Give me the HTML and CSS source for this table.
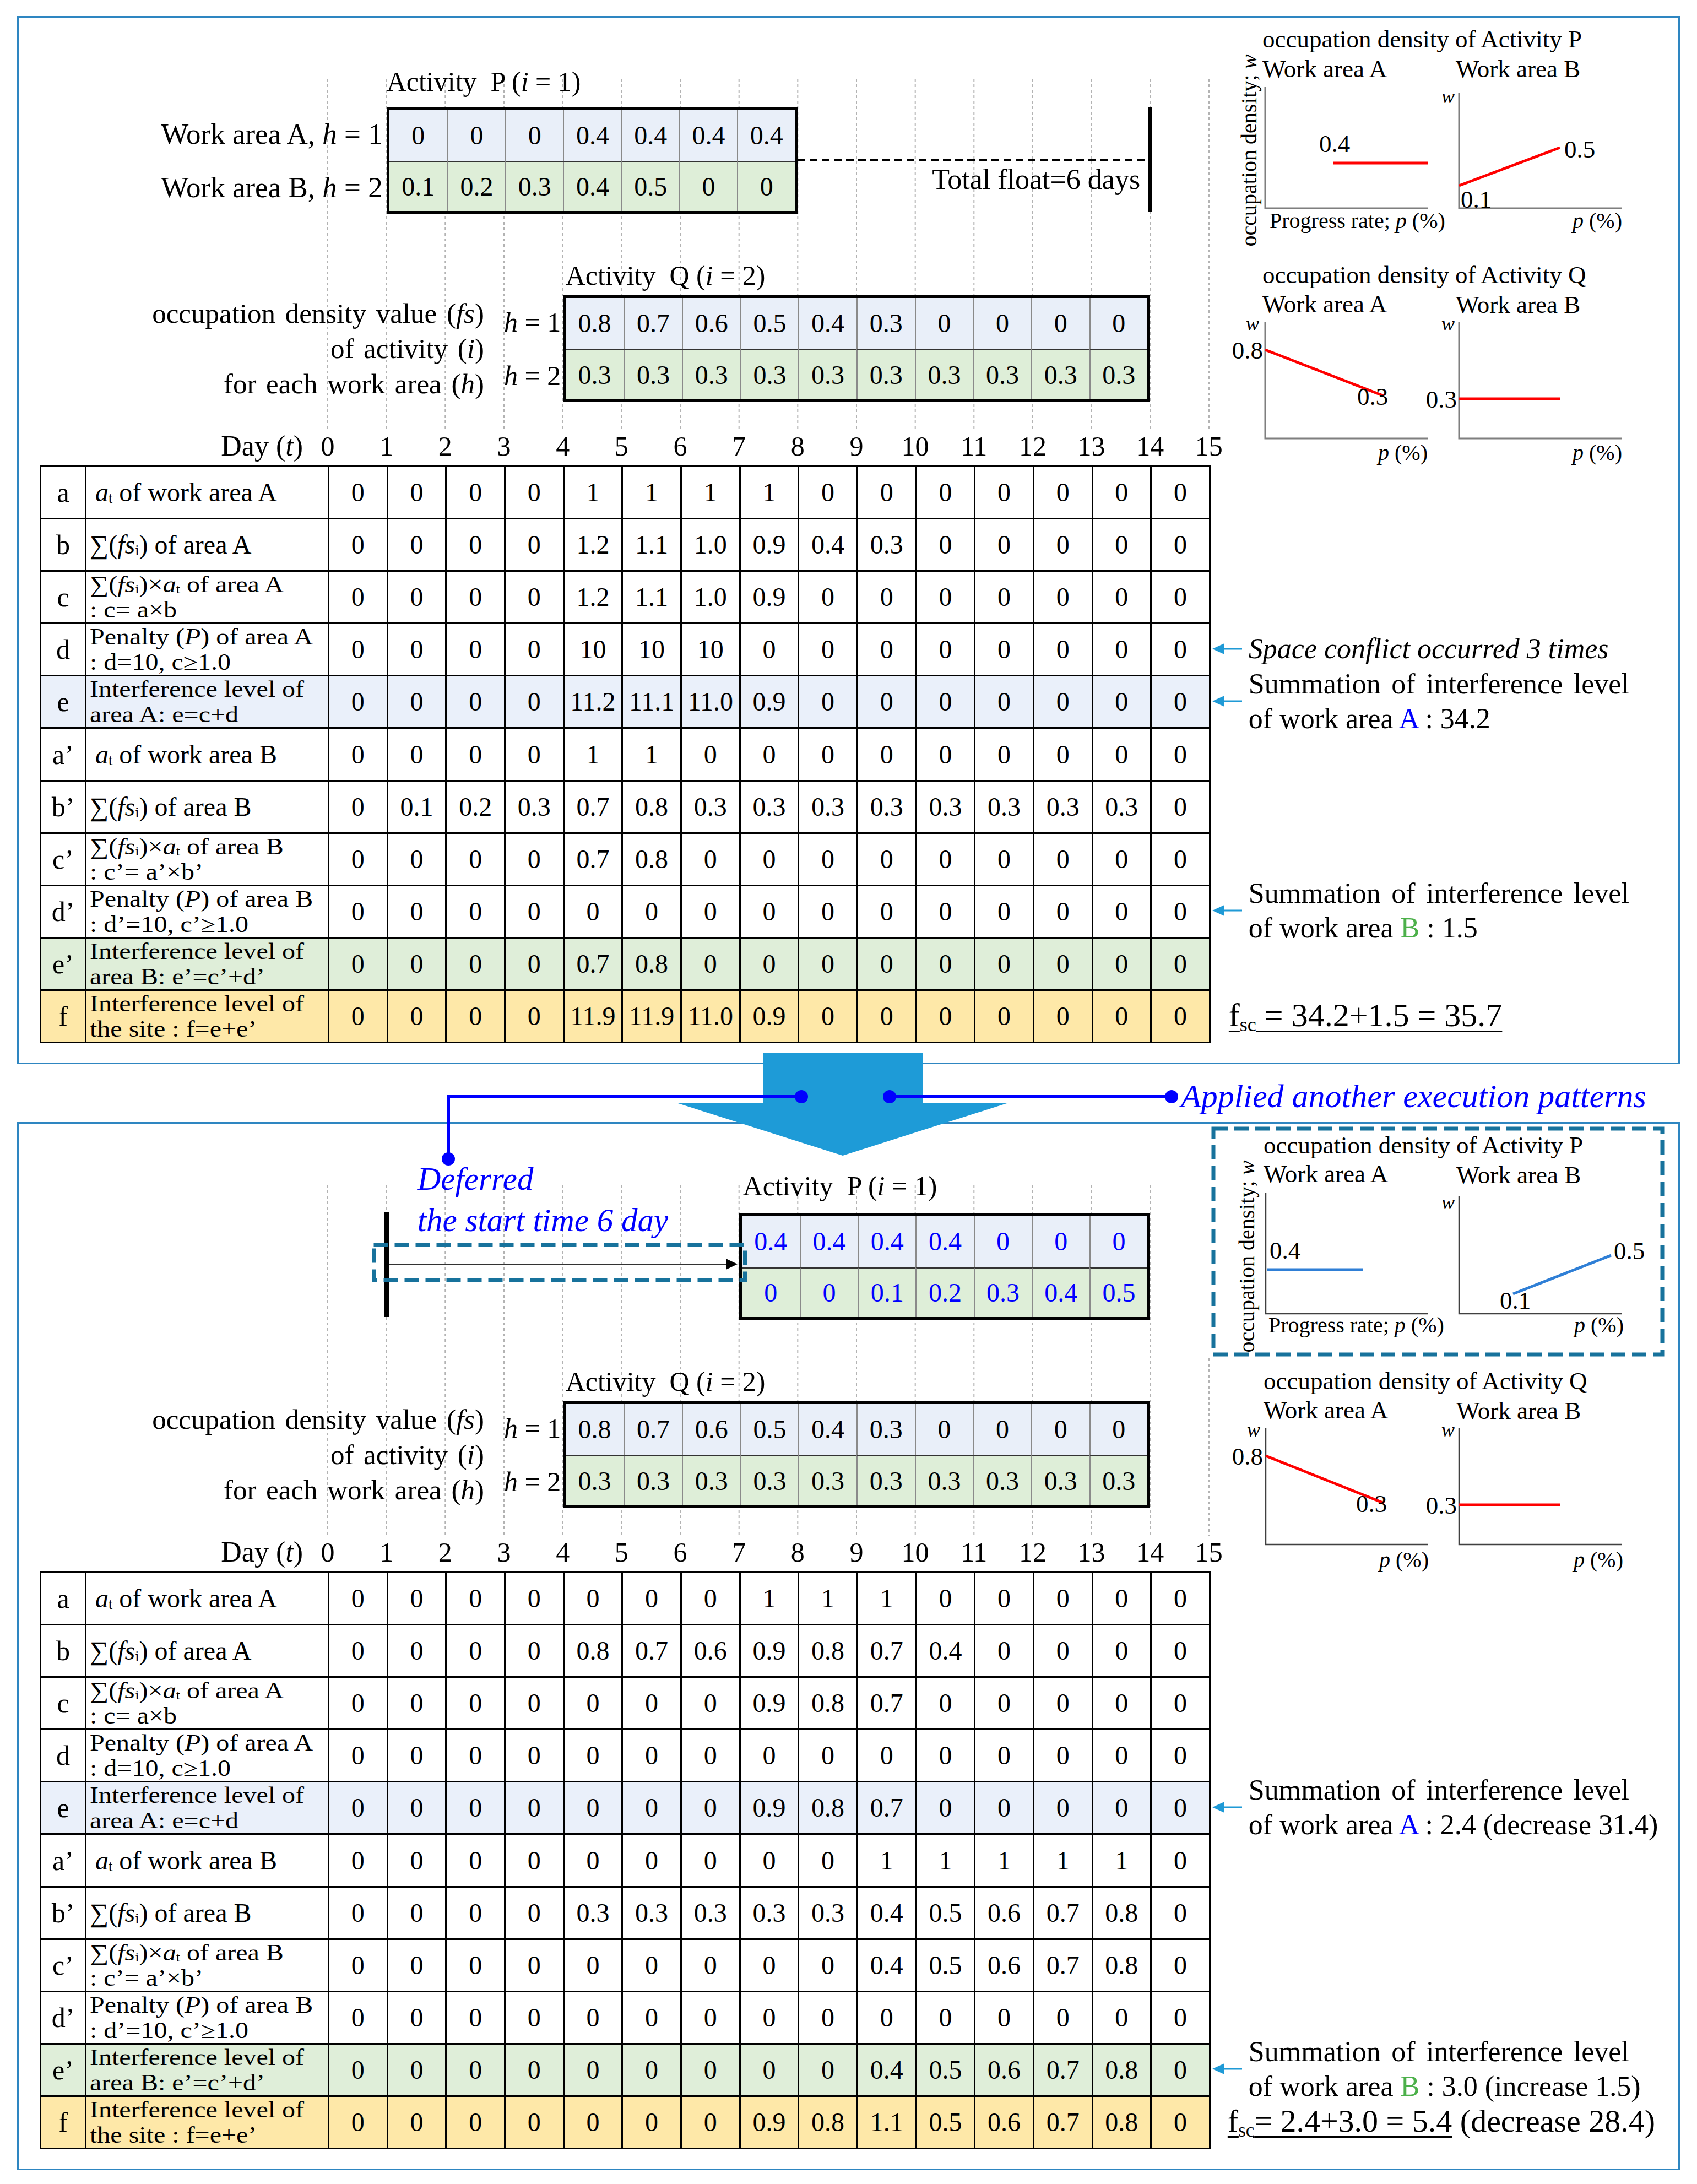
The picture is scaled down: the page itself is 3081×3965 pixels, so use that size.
FILE: index.html
```html
<!DOCTYPE html>
<html lang="en">
<head>
<meta charset="utf-8">
<title>Space conflict interference level</title>
<link rel="stylesheet" href="styles.css">
</head>
<body>
<div class="figure">

  <!-- ================= TOP PANEL ================= -->
  <section class="panel">
    <div class="upper">
      <div class="gantt">
        <svg class="grid" width="1602" height="637" viewBox="0 0 1602 637">
          <g class="gl">
            <line x1="1" y1="0" x2="1" y2="637"/><line x1="107.7" y1="0" x2="107.7" y2="637"/><line x1="214.3" y1="0" x2="214.3" y2="637"/><line x1="321" y1="0" x2="321" y2="637"/><line x1="427.7" y1="0" x2="427.7" y2="637"/><line x1="534.3" y1="0" x2="534.3" y2="637"/><line x1="641" y1="0" x2="641" y2="637"/><line x1="747.7" y1="0" x2="747.7" y2="637"/><line x1="854.3" y1="0" x2="854.3" y2="637"/><line x1="961" y1="0" x2="961" y2="637"/><line x1="1067.7" y1="0" x2="1067.7" y2="637"/><line x1="1174.3" y1="0" x2="1174.3" y2="637"/><line x1="1281" y1="0" x2="1281" y2="637"/><line x1="1387.7" y1="0" x2="1387.7" y2="637"/><line x1="1494.3" y1="0" x2="1494.3" y2="637"/><line x1="1601" y1="0" x2="1601" y2="637"/>
          </g>
        </svg>

        <div class="ptitle">Activity&nbsp; P (<i>i</i> = 1)</div>
        <div class="plabels">
          <div>Work area A, <i>h</i> = 1</div>
          <div>Work area B, <i>h</i> = 2</div>
        </div>
        <div class="bar bar7 pbar">
          <div class="c r1">0</div><div class="c r1">0</div><div class="c r1">0</div><div class="c r1">0.4</div><div class="c r1">0.4</div><div class="c r1">0.4</div><div class="c r1">0.4</div>
          <div class="c r2">0.1</div><div class="c r2">0.2</div><div class="c r2">0.3</div><div class="c r2">0.4</div><div class="c r2">0.5</div><div class="c r2">0</div><div class="c r2">0</div>
        </div>
        <div class="float">
          <div class="dash"></div>
          <div class="ftext">Total float=6 days</div>
        </div>

        <div class="qtitle">Activity&nbsp; Q (<i>i</i> = 2)</div>
        <div class="qlabels">
          <div>occupation density value (<i>fs</i>)</div>
          <div>of activity (<i>i</i>)</div>
          <div>for each work area (<i>h</i>)</div>
        </div>
        <div class="hlabels">
          <div><i>h</i> = 1</div>
          <div><i>h</i> = 2</div>
        </div>
        <div class="bar bar10 qbar">
          <div class="c r1">0.8</div><div class="c r1">0.7</div><div class="c r1">0.6</div><div class="c r1">0.5</div><div class="c r1">0.4</div><div class="c r1">0.3</div><div class="c r1">0</div><div class="c r1">0</div><div class="c r1">0</div><div class="c r1">0</div>
          <div class="c r2">0.3</div><div class="c r2">0.3</div><div class="c r2">0.3</div><div class="c r2">0.3</div><div class="c r2">0.3</div><div class="c r2">0.3</div><div class="c r2">0.3</div><div class="c r2">0.3</div><div class="c r2">0.3</div><div class="c r2">0.3</div>
        </div>

        <div class="dayrow">
          <div class="daylabel">Day (<i>t</i>)</div>
          <div class="daynums"><span>0</span><span>1</span><span>2</span><span>3</span><span>4</span><span>5</span><span>6</span><span>7</span><span>8</span><span>9</span><span>10</span><span>11</span><span>12</span><span>13</span><span>14</span><span>15</span></div>
        </div>
      </div>

      <div class="charts">
        <svg width="847" height="813" viewBox="0 0 847 813">
          <text x="92" y="54" class="t45">occupation density of Activity P</text>
          <text x="92" y="108" class="t45">Work area A</text>
          <text x="443" y="108" class="t45">Work area B</text>
          <text x="67" y="241" class="t40" text-anchor="middle" dominant-baseline="central" transform="rotate(-90 67 241)">occupation density; <tspan class="it">w</tspan></text>
          <path d="M97 126V346H392" class="axis"/>
          <line x1="220" y1="264" x2="392" y2="264" class="red"/>
          <text x="195" y="244" class="t45">0.4</text>
          <text x="105" y="382" class="t40">Progress rate; <tspan class="it">p</tspan> (%)</text>
          <path d="M449 136V346H745" class="axis"/>
          <text x="441" y="155" class="w" text-anchor="end">w</text>
          <line x1="449" y1="305" x2="632" y2="236" class="red"/>
          <text x="640" y="254" class="t45">0.5</text>
          <text x="452" y="345" class="t45">0.1</text>
          <text x="745" y="382" class="t40" text-anchor="end"><tspan class="it">p</tspan> (%)</text>

          <text x="92" y="482" class="t45">occupation density of Activity Q</text>
          <text x="92" y="535" class="t45">Work area A</text>
          <text x="443" y="536" class="t45">Work area B</text>
          <path d="M97 552V764H392" class="axis"/>
          <text x="86" y="568" class="w" text-anchor="end">w</text>
          <line x1="97" y1="603" x2="313" y2="687" class="red"/>
          <text x="93" y="619" class="t45" text-anchor="end">0.8</text>
          <text x="264" y="703" class="t45">0.3</text>
          <path d="M449 552V764H745" class="axis"/>
          <text x="441" y="568" class="w" text-anchor="end">w</text>
          <line x1="449" y1="692" x2="632" y2="692" class="red"/>
          <text x="445" y="708" class="t45" text-anchor="end">0.3</text>
          <text x="392" y="803" class="t40" text-anchor="end"><tspan class="it">p</tspan> (%)</text>
          <text x="745" y="803" class="t40" text-anchor="end"><tspan class="it">p</tspan> (%)</text>
        </svg>
      </div>
    </div>

    <div class="lower">
      <table class="calc">
        <colgroup><col class="c-let"><col class="c-lab"><col span="15" class="c-v"></colgroup>
        <tr><td class="let">a</td><td class="lab ind"><i>a</i><sub>t</sub> of work area A</td><td>0</td><td>0</td><td>0</td><td>0</td><td>1</td><td>1</td><td>1</td><td>1</td><td>0</td><td>0</td><td>0</td><td>0</td><td>0</td><td>0</td><td>0</td></tr>
        <tr><td class="let">b</td><td class="lab">∑(<i>fs</i><sub>i</sub>) of area A</td><td>0</td><td>0</td><td>0</td><td>0</td><td>1.2</td><td>1.1</td><td>1.0</td><td>0.9</td><td>0.4</td><td>0.3</td><td>0</td><td>0</td><td>0</td><td>0</td><td>0</td></tr>
        <tr><td class="let">c</td><td class="lab"><div class="two"><div>∑(<i>fs</i><sub>i</sub>)×<i>a</i><sub>t</sub> of area A</div><div>: c= a×b</div></div></td><td>0</td><td>0</td><td>0</td><td>0</td><td>1.2</td><td>1.1</td><td>1.0</td><td>0.9</td><td>0</td><td>0</td><td>0</td><td>0</td><td>0</td><td>0</td><td>0</td></tr>
        <tr><td class="let">d</td><td class="lab"><div class="two"><div>Penalty (<i>P</i>) of area A</div><div>: d=10, c≥1.0</div></div></td><td>0</td><td>0</td><td>0</td><td>0</td><td>10</td><td>10</td><td>10</td><td>0</td><td>0</td><td>0</td><td>0</td><td>0</td><td>0</td><td>0</td><td>0</td></tr>
        <tr class="re"><td class="let">e</td><td class="lab"><div class="two"><div>Interference level of</div><div>area A: e=c+d</div></div></td><td>0</td><td>0</td><td>0</td><td>0</td><td>11.2</td><td>11.1</td><td>11.0</td><td>0.9</td><td>0</td><td>0</td><td>0</td><td>0</td><td>0</td><td>0</td><td>0</td></tr>
        <tr><td class="let">a’</td><td class="lab ind"><i>a</i><sub>t</sub> of work area B</td><td>0</td><td>0</td><td>0</td><td>0</td><td>1</td><td>1</td><td>0</td><td>0</td><td>0</td><td>0</td><td>0</td><td>0</td><td>0</td><td>0</td><td>0</td></tr>
        <tr><td class="let">b’</td><td class="lab">∑(<i>fs</i><sub>i</sub>) of area B</td><td>0</td><td>0.1</td><td>0.2</td><td>0.3</td><td>0.7</td><td>0.8</td><td>0.3</td><td>0.3</td><td>0.3</td><td>0.3</td><td>0.3</td><td>0.3</td><td>0.3</td><td>0.3</td><td>0</td></tr>
        <tr><td class="let">c’</td><td class="lab"><div class="two"><div>∑(<i>fs</i><sub>i</sub>)×<i>a</i><sub>t</sub> of area B</div><div>: c’= a’×b’</div></div></td><td>0</td><td>0</td><td>0</td><td>0</td><td>0.7</td><td>0.8</td><td>0</td><td>0</td><td>0</td><td>0</td><td>0</td><td>0</td><td>0</td><td>0</td><td>0</td></tr>
        <tr><td class="let">d’</td><td class="lab"><div class="two"><div>Penalty (<i>P</i>) of area B</div><div>: d’=10, c’≥1.0</div></div></td><td>0</td><td>0</td><td>0</td><td>0</td><td>0</td><td>0</td><td>0</td><td>0</td><td>0</td><td>0</td><td>0</td><td>0</td><td>0</td><td>0</td><td>0</td></tr>
        <tr class="re2"><td class="let">e’</td><td class="lab"><div class="two"><div>Interference level of</div><div>area B: e’=c’+d’</div></div></td><td>0</td><td>0</td><td>0</td><td>0</td><td>0.7</td><td>0.8</td><td>0</td><td>0</td><td>0</td><td>0</td><td>0</td><td>0</td><td>0</td><td>0</td><td>0</td></tr>
        <tr class="rf"><td class="let">f</td><td class="lab"><div class="two"><div>Interference level of</div><div>the site : f=e+e’</div></div></td><td>0</td><td>0</td><td>0</td><td>0</td><td>11.9</td><td>11.9</td><td>11.0</td><td>0.9</td><td>0</td><td>0</td><td>0</td><td>0</td><td>0</td><td>0</td><td>0</td></tr>
      </table>

      <div class="notes">
        <div class="note n-d">
          <svg class="arr" width="57" height="24" viewBox="0 0 57 24"><polygon points="3,12 25,2 25,22"/><line x1="24" y1="12" x2="57" y2="12"/></svg>
          <div class="ntext it-note">Space conflict occurred 3 times</div>
        </div>
        <div class="note n-e">
          <svg class="arr" width="57" height="24" viewBox="0 0 57 24"><polygon points="3,12 25,2 25,22"/><line x1="24" y1="12" x2="57" y2="12"/></svg>
          <div class="ntext"><div class="l1">Summation of interference level</div><div>of work area <span class="ca">A</span> : 34.2</div></div>
        </div>
        <div class="note n-d2">
          <svg class="arr" width="57" height="24" viewBox="0 0 57 24"><polygon points="3,12 25,2 25,22"/><line x1="24" y1="12" x2="57" y2="12"/></svg>
          <div class="ntext"><div class="l1">Summation of interference level</div><div>of work area <span class="cb">B</span> : 1.5</div></div>
        </div>
        <div class="note n-f">
          <div class="fsc"><span class="ul">f<sub>sc</sub> = 34.2+1.5 = 35.7</span></div>
        </div>
      </div>
    </div>
  </section>

  <div class="between">
    <span class="applied">Applied another execution patterns</span>
  </div>

  <!-- ================= BOTTOM PANEL ================= -->
  <section class="panel">
    <div class="upper">
      <div class="gantt">
        <svg class="grid" width="1602" height="637" viewBox="0 0 1602 637">
          <g class="gl">
            <line x1="1" y1="0" x2="1" y2="637"/><line x1="107.7" y1="0" x2="107.7" y2="637"/><line x1="214.3" y1="0" x2="214.3" y2="637"/><line x1="321" y1="0" x2="321" y2="637"/><line x1="427.7" y1="0" x2="427.7" y2="637"/><line x1="534.3" y1="0" x2="534.3" y2="637"/><line x1="641" y1="0" x2="641" y2="637"/><line x1="747.7" y1="0" x2="747.7" y2="637"/><line x1="854.3" y1="0" x2="854.3" y2="637"/><line x1="961" y1="0" x2="961" y2="637"/><line x1="1067.7" y1="0" x2="1067.7" y2="637"/><line x1="1174.3" y1="0" x2="1174.3" y2="637"/><line x1="1281" y1="0" x2="1281" y2="637"/><line x1="1387.7" y1="0" x2="1387.7" y2="637"/><line x1="1494.3" y1="0" x2="1494.3" y2="637"/><line x1="1601" y1="315" x2="1601" y2="637"/>
          </g>
        </svg>

        <div class="deferred">
          <svg class="defsvg" width="700" height="200" viewBox="0 0 700 200">
            <rect x="26" y="3" width="8" height="190" fill="#000"/>
            <line x1="34" y1="97" x2="650" y2="97" stroke="#333" stroke-width="2"/>
            <polygon points="667,97 646,87 646,107" fill="#000"/>
            <rect x="6.5" y="62.5" width="674" height="64" fill="none" stroke="#17729c" stroke-width="7" stroke-dasharray="26 12"/>
          </svg>
          <div class="deftext">Deferred<br>the start time 6 day</div>
        </div>

        <div class="ptitle ptitle-b">Activity&nbsp; P (<i>i</i> = 1)</div>
        <div class="bar bar7 pbar-b blue">
          <div class="c r1">0.4</div><div class="c r1">0.4</div><div class="c r1">0.4</div><div class="c r1">0.4</div><div class="c r1">0</div><div class="c r1">0</div><div class="c r1">0</div>
          <div class="c r2">0</div><div class="c r2">0</div><div class="c r2">0.1</div><div class="c r2">0.2</div><div class="c r2">0.3</div><div class="c r2">0.4</div><div class="c r2">0.5</div>
        </div>

        <div class="qtitle">Activity&nbsp; Q (<i>i</i> = 2)</div>
        <div class="qlabels">
          <div>occupation density value (<i>fs</i>)</div>
          <div>of activity (<i>i</i>)</div>
          <div>for each work area (<i>h</i>)</div>
        </div>
        <div class="hlabels">
          <div><i>h</i> = 1</div>
          <div><i>h</i> = 2</div>
        </div>
        <div class="bar bar10 qbar">
          <div class="c r1">0.8</div><div class="c r1">0.7</div><div class="c r1">0.6</div><div class="c r1">0.5</div><div class="c r1">0.4</div><div class="c r1">0.3</div><div class="c r1">0</div><div class="c r1">0</div><div class="c r1">0</div><div class="c r1">0</div>
          <div class="c r2">0.3</div><div class="c r2">0.3</div><div class="c r2">0.3</div><div class="c r2">0.3</div><div class="c r2">0.3</div><div class="c r2">0.3</div><div class="c r2">0.3</div><div class="c r2">0.3</div><div class="c r2">0.3</div><div class="c r2">0.3</div>
        </div>

        <div class="dayrow">
          <div class="daylabel">Day (<i>t</i>)</div>
          <div class="daynums"><span>0</span><span>1</span><span>2</span><span>3</span><span>4</span><span>5</span><span>6</span><span>7</span><span>8</span><span>9</span><span>10</span><span>11</span><span>12</span><span>13</span><span>14</span><span>15</span></div>
        </div>
      </div>

      <div class="charts">
        <svg width="847" height="813" viewBox="0 0 847 813">
          <rect x="3" y="9" width="815" height="410" fill="none" stroke="#17729c" stroke-width="7" stroke-dasharray="26 12"/>
          <text x="94" y="54" class="t45">occupation density of Activity P</text>
          <text x="94" y="106" class="t45">Work area A</text>
          <text x="444" y="108" class="t45">Work area B</text>
          <text x="63" y="241" class="t40" text-anchor="middle" dominant-baseline="central" transform="rotate(-90 63 241)">occupation density; <tspan class="it">w</tspan></text>
          <path d="M98 125V345H392" class="axis2"/>
          <line x1="100" y1="265" x2="275" y2="265" class="blueline"/>
          <text x="105" y="245" class="t45">0.4</text>
          <text x="103" y="379" class="t40">Progress rate; <tspan class="it">p</tspan> (%)</text>
          <path d="M449 131V345H745" class="axis2"/>
          <text x="441" y="155" class="w" text-anchor="end">w</text>
          <line x1="547" y1="309" x2="725" y2="239" class="blueline"/>
          <text x="730" y="246" class="t45">0.5</text>
          <text x="523" y="336" class="t45">0.1</text>
          <text x="748" y="379" class="t40" text-anchor="end"><tspan class="it">p</tspan> (%)</text>

          <text x="94" y="482" class="t45">occupation density of Activity Q</text>
          <text x="94" y="535" class="t45">Work area A</text>
          <text x="444" y="536" class="t45">Work area B</text>
          <path d="M98 552V764H392" class="axis2"/>
          <text x="88" y="568" class="w" text-anchor="end">w</text>
          <line x1="98" y1="603" x2="313" y2="689" class="red"/>
          <text x="93" y="619" class="t45" text-anchor="end">0.8</text>
          <text x="262" y="705" class="t45">0.3</text>
          <path d="M449 552V764H745" class="axis2"/>
          <text x="441" y="568" class="w" text-anchor="end">w</text>
          <line x1="449" y1="692" x2="633" y2="692" class="red"/>
          <text x="445" y="708" class="t45" text-anchor="end">0.3</text>
          <text x="394" y="805" class="t40" text-anchor="end"><tspan class="it">p</tspan> (%)</text>
          <text x="747" y="805" class="t40" text-anchor="end"><tspan class="it">p</tspan> (%)</text>
        </svg>
      </div>
    </div>

    <div class="lower">
      <table class="calc">
        <colgroup><col class="c-let"><col class="c-lab"><col span="15" class="c-v"></colgroup>
        <tr><td class="let">a</td><td class="lab ind"><i>a</i><sub>t</sub> of work area A</td><td>0</td><td>0</td><td>0</td><td>0</td><td>0</td><td>0</td><td>0</td><td>1</td><td>1</td><td>1</td><td>0</td><td>0</td><td>0</td><td>0</td><td>0</td></tr>
        <tr><td class="let">b</td><td class="lab">∑(<i>fs</i><sub>i</sub>) of area A</td><td>0</td><td>0</td><td>0</td><td>0</td><td>0.8</td><td>0.7</td><td>0.6</td><td>0.9</td><td>0.8</td><td>0.7</td><td>0.4</td><td>0</td><td>0</td><td>0</td><td>0</td></tr>
        <tr><td class="let">c</td><td class="lab"><div class="two"><div>∑(<i>fs</i><sub>i</sub>)×<i>a</i><sub>t</sub> of area A</div><div>: c= a×b</div></div></td><td>0</td><td>0</td><td>0</td><td>0</td><td>0</td><td>0</td><td>0</td><td>0.9</td><td>0.8</td><td>0.7</td><td>0</td><td>0</td><td>0</td><td>0</td><td>0</td></tr>
        <tr><td class="let">d</td><td class="lab"><div class="two"><div>Penalty (<i>P</i>) of area A</div><div>: d=10, c≥1.0</div></div></td><td>0</td><td>0</td><td>0</td><td>0</td><td>0</td><td>0</td><td>0</td><td>0</td><td>0</td><td>0</td><td>0</td><td>0</td><td>0</td><td>0</td><td>0</td></tr>
        <tr class="re"><td class="let">e</td><td class="lab"><div class="two"><div>Interference level of</div><div>area A: e=c+d</div></div></td><td>0</td><td>0</td><td>0</td><td>0</td><td>0</td><td>0</td><td>0</td><td>0.9</td><td>0.8</td><td>0.7</td><td>0</td><td>0</td><td>0</td><td>0</td><td>0</td></tr>
        <tr><td class="let">a’</td><td class="lab ind"><i>a</i><sub>t</sub> of work area B</td><td>0</td><td>0</td><td>0</td><td>0</td><td>0</td><td>0</td><td>0</td><td>0</td><td>0</td><td>1</td><td>1</td><td>1</td><td>1</td><td>1</td><td>0</td></tr>
        <tr><td class="let">b’</td><td class="lab">∑(<i>fs</i><sub>i</sub>) of area B</td><td>0</td><td>0</td><td>0</td><td>0</td><td>0.3</td><td>0.3</td><td>0.3</td><td>0.3</td><td>0.3</td><td>0.4</td><td>0.5</td><td>0.6</td><td>0.7</td><td>0.8</td><td>0</td></tr>
        <tr><td class="let">c’</td><td class="lab"><div class="two"><div>∑(<i>fs</i><sub>i</sub>)×<i>a</i><sub>t</sub> of area B</div><div>: c’= a’×b’</div></div></td><td>0</td><td>0</td><td>0</td><td>0</td><td>0</td><td>0</td><td>0</td><td>0</td><td>0</td><td>0.4</td><td>0.5</td><td>0.6</td><td>0.7</td><td>0.8</td><td>0</td></tr>
        <tr><td class="let">d’</td><td class="lab"><div class="two"><div>Penalty (<i>P</i>) of area B</div><div>: d’=10, c’≥1.0</div></div></td><td>0</td><td>0</td><td>0</td><td>0</td><td>0</td><td>0</td><td>0</td><td>0</td><td>0</td><td>0</td><td>0</td><td>0</td><td>0</td><td>0</td><td>0</td></tr>
        <tr class="re2"><td class="let">e’</td><td class="lab"><div class="two"><div>Interference level of</div><div>area B: e’=c’+d’</div></div></td><td>0</td><td>0</td><td>0</td><td>0</td><td>0</td><td>0</td><td>0</td><td>0</td><td>0</td><td>0.4</td><td>0.5</td><td>0.6</td><td>0.7</td><td>0.8</td><td>0</td></tr>
        <tr class="rf"><td class="let">f</td><td class="lab"><div class="two"><div>Interference level of</div><div>the site : f=e+e’</div></div></td><td>0</td><td>0</td><td>0</td><td>0</td><td>0</td><td>0</td><td>0</td><td>0.9</td><td>0.8</td><td>1.1</td><td>0.5</td><td>0.6</td><td>0.7</td><td>0.8</td><td>0</td></tr>
      </table>

      <div class="notes">
        <div class="note n-e">
          <svg class="arr" width="57" height="24" viewBox="0 0 57 24"><polygon points="3,12 25,2 25,22"/><line x1="24" y1="12" x2="57" y2="12"/></svg>
          <div class="ntext"><div class="l1">Summation of interference level</div><div>of work area <span class="ca">A</span> : 2.4 (decrease 31.4)</div></div>
        </div>
        <div class="note n-e2">
          <svg class="arr" width="57" height="24" viewBox="0 0 57 24"><polygon points="3,12 25,2 25,22"/><line x1="24" y1="12" x2="57" y2="12"/></svg>
          <div class="ntext"><div class="l1">Summation of interference level</div><div>of work area <span class="cb">B</span> : 3.0 (increase 1.5)</div></div>
        </div>
        <div class="note n-f">
          <div class="fsc fsc-b"><span class="ul">f<sub>sc</sub>= 2.4+3.0 = 5.4</span> (decrease 28.4)</div>
        </div>
      </div>
    </div>
  </section>

  <!-- transition arrow and connectors (drawn over the panel borders) -->
  <svg class="overlay" width="1360" height="220" viewBox="0 0 1360 220">
    <polygon points="605,12 896,12 896,103 1048,103 750,198 451,103 605,103" fill="#1e9bd7"/>
    <polyline points="675,91 34,91 34,204" fill="none" stroke="#0000ff" stroke-width="6"/>
    <circle cx="675" cy="91" r="12" fill="#0000ff"/>
    <circle cx="34" cy="204" r="12" fill="#0000ff"/>
    <line x1="835" y1="91" x2="1347" y2="91" stroke="#0000ff" stroke-width="6"/>
    <circle cx="835" cy="91" r="12" fill="#0000ff"/>
    <circle cx="1347" cy="91" r="12" fill="#0000ff"/>
  </svg>
</div>
</body>
</html>
```

FILE: styles.css
```css
* { box-sizing: border-box; }

html, body {
  margin: 0;
  padding: 0;
  background: #ffffff;
}

body {
  width: 3081px;
  height: 3965px;
  overflow: hidden;
  font-family: "Liberation Serif", "Times New Roman", serif;
  color: #000;
}

.figure {
  position: relative;
  width: 3081px;
  height: 3965px;
  padding: 29px 0 0 31px;
}

.panel {
  position: relative;
  width: 3019px;
  height: 1903px;
  border: 3px solid #2e86c1;
}

.between {
  height: 105px;
  display: flex;
  align-items: center;
  padding-left: 2113px;
  padding-top: 11px;
}

.applied {
  font-style: italic;
  font-size: 60px;
  line-height: 70px;
  color: #0000ff;
  white-space: nowrap;
}

/* ---------- upper area: gantt + density charts ---------- */
.upper {
  display: flex;
  height: 813px;
}

.gantt {
  position: relative;
  flex: none;
  width: 2161px;
  display: grid;
  grid-template-columns: 561px repeat(15, 106.667px);
  grid-template-rows: 163px 193px 148px 194px 115px;
  font-size: 50px;
  line-height: 60px;
}

.gantt > * {
  position: relative;
  z-index: 1;
}

.gantt > .grid {
  position: absolute;
  z-index: 0;
  left: 560px;
  top: 111px;
}

.gl line {
  stroke: #b3b3b3;
  stroke-width: 2;
  stroke-dasharray: 5 5;
}

.ptitle {
  grid-row: 1;
  grid-column: 3 / 12;
  align-self: end;
  margin-bottom: 17px;
  white-space: nowrap;
}

.ptitle-b {
  grid-column: 9 / 17;
  margin-left: 7px;
  margin-bottom: 20px;
}

.plabels {
  grid-row: 2;
  grid-column: 1 / 3;
  display: grid;
  grid-template-rows: 1fr 1fr;
  align-items: center;
  text-align: right;
  padding-right: 7px;
  font-size: 53px;
  white-space: nowrap;
}

.bar {
  display: grid;
  grid-template-rows: 1fr 1fr;
  border: 5px solid #000;
  font-size: 48px;
}

.bar7 { grid-template-columns: repeat(7, 1fr); }
.bar10 { grid-template-columns: repeat(10, 1fr); }

.bar .c {
  display: flex;
  align-items: center;
  justify-content: center;
  border-left: 2px solid #8a8a8a;
}

.bar7 .c:nth-child(7n+1),
.bar10 .c:nth-child(10n+1) { border-left: 0; }

.bar .r1 { background: #e9eff9; }
.bar .r2 { background: #deeed8; border-top: 3px solid #333; }

.bar.blue { color: #0000ff; }

.pbar { grid-row: 2; grid-column: 3 / 10; }
.pbar-b { grid-row: 2; grid-column: 9 / 16; }
.qbar { grid-row: 4; grid-column: 6 / 16; }

.float {
  grid-row: 2;
  grid-column: 10 / 16;
  align-self: start;
  height: 190px;
  margin-right: -4px;
  border-right: 7px solid #000;
  display: flex;
  flex-direction: column;
  align-items: flex-end;
}

.float .dash {
  width: 100%;
  height: 3px;
  margin-top: 94px;
  background: repeating-linear-gradient(90deg, #000 0 14px, transparent 14px 22px);
}

.float .ftext {
  margin-top: 4px;
  padding-right: 15px;
  font-size: 52px;
  white-space: nowrap;
}

.deferred {
  grid-row: 2;
  grid-column: 3 / 9;
  z-index: 2;
}

.defsvg {
  position: absolute;
  left: -30px;
  top: -5px;
  overflow: visible;
}

.deftext {
  position: absolute;
  left: 56px;
  top: -100px;
  font-style: italic;
  font-size: 59px;
  line-height: 75px;
  color: #0000ff;
  white-space: nowrap;
}

.qtitle {
  grid-row: 3;
  grid-column: 6 / 15;
  align-self: end;
  margin-bottom: 6px;
  margin-left: 5px;
  white-space: nowrap;
}

.qlabels {
  grid-row: 4;
  grid-column: 1 / 5;
  align-self: center;
  text-align: right;
  padding-right: 36px;
  font-size: 51px;
  line-height: 64px;
  word-spacing: 5px;
  white-space: nowrap;
}

.hlabels {
  grid-row: 4;
  grid-column: 5 / 6;
  display: grid;
  grid-template-rows: 1fr 1fr;
  align-items: center;
  text-align: right;
  padding-right: 5px;
  white-space: nowrap;
}

.dayrow {
  grid-row: 5;
  grid-column: 1 / -1;
  align-self: end;
  margin-bottom: 5px;
  display: flex;
}

.daylabel {
  flex: none;
  width: 516px;
  text-align: right;
  font-size: 52px;
  white-space: nowrap;
}

.daynums {
  flex: none;
  display: flex;
  margin-left: -8.333px;
}

.daynums span {
  flex: none;
  width: 106.667px;
  text-align: center;
}

.charts {
  flex: none;
  width: 847px;
  margin-left: 5px;
}

.charts svg { display: block; overflow: visible; }

.charts text {
  font-family: "Liberation Serif", "Times New Roman", serif;
  fill: #000;
}

.t45 { font-size: 45px; }
.t40 { font-size: 40px; }
.w { font-size: 36px; font-style: italic; }
.it { font-style: italic; }

.axis { fill: none; stroke: #7f7f7f; stroke-width: 3; }
.axis2 { fill: none; stroke: #404040; stroke-width: 2.5; }
.red { stroke: #ff0000; stroke-width: 5; }
.blueline { stroke: #2f7fd6; stroke-width: 5; }

/* ---------- lower area: calculation table + notes ---------- */
.lower {
  display: flex;
  padding-left: 38px;
}

.calc {
  flex: none;
  width: 2123px;
  table-layout: fixed;
  border-collapse: collapse;
}

.c-let { width: 82px; }
.c-lab { width: 441px; }
.c-v { width: 106.667px; }

.calc td {
  border: 3px solid #000;
  height: 95.1px;
  padding: 0;
  text-align: center;
  vertical-align: middle;
  font-size: 48px;
  line-height: 56px;
}

.calc td.let { font-size: 50px; }

.calc td.lab {
  text-align: left;
  padding-left: 6px;
  white-space: nowrap;
}

.calc td.lab.ind { padding-left: 16px; }

/* two-line labels: set tight, as in the source figure */
.calc td.lab .two {
  height: 108px;
  margin: -8.5px 0;
  line-height: 54px;
  transform: scaleY(0.86);
  transform-origin: 0 50%;
}

.calc tr.re td { background: #eaf0fa; }
.calc tr.re2 td { background: #dfeed9; }
.calc tr.rf td { background: #fee8a8; }

sub {
  font-size: 0.55em;
  line-height: 0;
  vertical-align: -0.1em;
}

.notes {
  flex: 1;
  display: grid;
  grid-template-rows: repeat(11, 95.1px);
}

.note {
  align-self: center;
  display: flex;
  align-items: center;
  font-size: 52px;
  line-height: 63px;
  white-space: nowrap;
}

.n-d { grid-row: 4; }
.n-e { grid-row: 5; }
.n-d2 { grid-row: 9; }
.n-e2 { grid-row: 10; }
.n-f { grid-row: 11; }

.arr {
  flex: none;
  margin-right: 12px;
}

.arr polygon { fill: #1f9ad6; }
.arr line { stroke: #1f9ad6; stroke-width: 3; }

.it-note { font-style: italic; }

.l1 {
  width: 691px;
  text-align: justify;
  text-align-last: justify;
}

.ca { color: #0000ff; }
.cb { color: #4cb04a; }

.fsc {
  margin-left: 33px;
  font-size: 60px;
  line-height: 70px;
}

.fsc sub { font-size: 0.6em; vertical-align: -0.25em; }

.fsc-b { margin-left: 31px; font-size: 58px; }

.ul {
  text-decoration: underline;
  text-decoration-thickness: 3px;
  text-underline-offset: 8px;
}

.overlay {
  position: absolute;
  left: 780px;
  top: 1900px;
  z-index: 5;
  overflow: visible;
}
```
